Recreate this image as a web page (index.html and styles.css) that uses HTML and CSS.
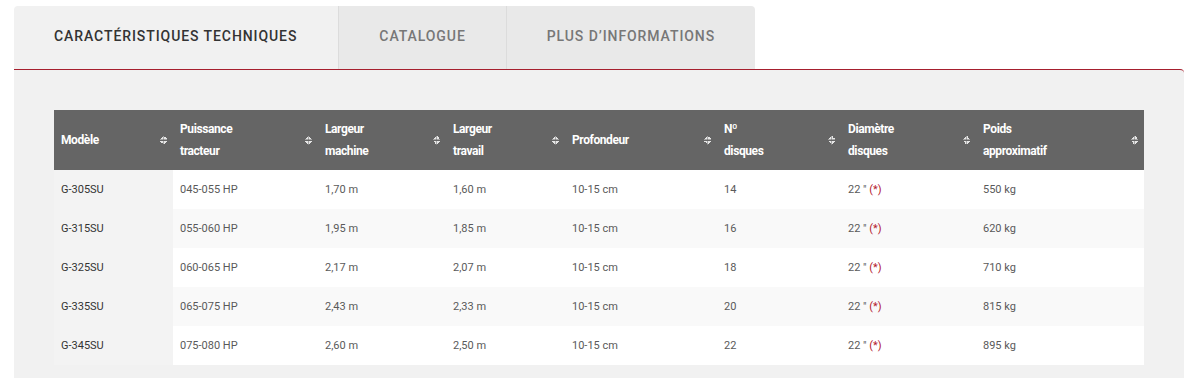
FILE: index.html
```html
<!DOCTYPE html>
<html lang="fr">
<head>
<meta charset="utf-8">
<link rel="stylesheet" href="styles.css">
</head>
<body>
<div class="wrap">
  <div class="tabs">
    <div class="tab active">CARACTÉRISTIQUES TECHNIQUES</div>
    <div class="tab">CATALOGUE</div>
    <div class="tab last">PLUS D’INFORMATIONS</div>
  </div>
  <div class="panel">
    <table class="spec">
      <colgroup>
        <col style="width:119px"><col style="width:145px"><col style="width:128px"><col style="width:119px">
        <col style="width:152px"><col style="width:124px"><col style="width:135px"><col style="width:168px">
      </colgroup>
      <thead>
        <tr>
          <th><div class="h"><span>Modèle</span><i class="sort"></i></div></th>
          <th><div class="h"><span>Puissance<br>tracteur</span><i class="sort"></i></div></th>
          <th><div class="h"><span>Largeur<br>machine</span><i class="sort"></i></div></th>
          <th><div class="h"><span>Largeur<br>travail</span><i class="sort"></i></div></th>
          <th><div class="h"><span>Profondeur</span><i class="sort"></i></div></th>
          <th><div class="h"><span>Nº<br>disques</span><i class="sort"></i></div></th>
          <th><div class="h"><span>Diamètre<br>disques</span><i class="sort"></i></div></th>
          <th><div class="h"><span>Poids<br>approximatif</span><i class="sort"></i></div></th>
        </tr>
      </thead>
      <tbody>
        <tr><td>G-305SU</td><td>045-055 HP</td><td>1,70 m</td><td>1,60 m</td><td>10-15 cm</td><td>14</td><td>22 " <span class="red">(*)</span></td><td>550 kg</td></tr>
        <tr><td>G-315SU</td><td>055-060 HP</td><td>1,95 m</td><td>1,85 m</td><td>10-15 cm</td><td>16</td><td>22 " <span class="red">(*)</span></td><td>620 kg</td></tr>
        <tr><td>G-325SU</td><td>060-065 HP</td><td>2,17 m</td><td>2,07 m</td><td>10-15 cm</td><td>18</td><td>22 " <span class="red">(*)</span></td><td>710 kg</td></tr>
        <tr><td>G-335SU</td><td>065-075 HP</td><td>2,43 m</td><td>2,33 m</td><td>10-15 cm</td><td>20</td><td>22 " <span class="red">(*)</span></td><td>815 kg</td></tr>
        <tr><td>G-345SU</td><td>075-080 HP</td><td>2,60 m</td><td>2,50 m</td><td>10-15 cm</td><td>22</td><td>22 " <span class="red">(*)</span></td><td>895 kg</td></tr>
      </tbody>
    </table>
  </div>
</div>
</body>
</html>
```

FILE: styles.css
```css
html, body {
  margin: 0;
  padding: 0;
  background: #ffffff;
  font-family: Roboto, "Liberation Sans", Arial, sans-serif;
}

.wrap {
  padding: 6px 8px 0 14px;
}

.tabs {
  display: flex;
  height: 63px;
}

.tab {
  display: flex;
  align-items: center;
  padding: 0 40px 3px 40px;
  font-size: 14px;
  font-weight: 500;
  letter-spacing: 0.92px;
  color: #777777;
  background: #e9e9e9;
  border-left: 1px solid #dcdcdc;
}

.tab.active {
  background: #f1f1f1;
  color: #333333;
  border-left: none;
  border-top-left-radius: 4px;
  padding-right: 41px;
}

.tab.last {
  border-top-right-radius: 4px;
}

.panel {
  background: #f1f1f1;
  border-top: 1px solid #a61f2e;
  border-top-right-radius: 4px;
  padding: 40px 40px 30px 40px;
}

.spec {
  border-collapse: collapse;
  table-layout: fixed;
  width: 1090px;
}

.spec th {
  background: #656565;
  color: #ffffff;
  font-size: 12px;
  font-weight: 700;
  letter-spacing: -0.4px;
  text-align: left;
  padding: 8px 6px 8px 7px;
  height: 44px;
  line-height: 22px;
  vertical-align: middle;
}

.h {
  display: flex;
  align-items: center;
  justify-content: space-between;
}

.sort {
  display: block;
  width: 7px;
  height: 9px;
  flex: none;
  background:
    linear-gradient(to bottom right, transparent 50%, #e6e6e6 50%) left top / 3.5px 3.5px no-repeat,
    linear-gradient(to bottom left, transparent 50%, #e6e6e6 50%) right top / 3.5px 3.5px no-repeat,
    linear-gradient(to top right, transparent 50%, #e6e6e6 50%) left bottom / 3.5px 3.5px no-repeat,
    linear-gradient(to top left, transparent 50%, #e6e6e6 50%) right bottom / 3.5px 3.5px no-repeat;
}

.spec td {
  height: 39px;
  padding: 0 7px;
  font-size: 11px;
  color: #5a5a5a;
  background: #ffffff;
  vertical-align: middle;
}

.spec tbody tr:nth-child(even) td {
  background: #f9f9f9;
}

.spec tbody td:first-child,
.spec tbody tr:nth-child(even) td:first-child {
  background: #f3f3f3;
  color: #333333;
}

.red {
  color: #b3202f;
}
```
